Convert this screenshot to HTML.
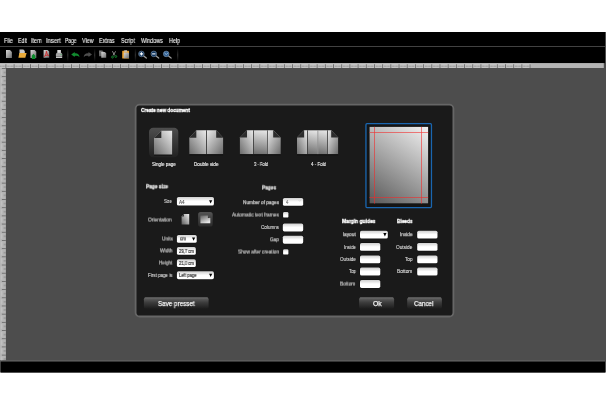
<!DOCTYPE html>
<html><head><meta charset="utf-8"><title>Create new document</title>
<style>
html,body{margin:0;padding:0;background:#fff;}
body{width:606px;height:406px;position:relative;overflow:hidden;font-family:"Liberation Sans",sans-serif;color:#fff;}
.a,.t{position:absolute;}
.t{white-space:nowrap;line-height:1;transform-origin:0 50%;will-change:transform;-webkit-text-stroke-width:0.12px;}

</style></head><body>
<svg class="a" style="left:0;top:0" width="606" height="406" viewBox="0 0 606 406">
<rect x="0" y="32" width="606" height="340.5" fill="#4d4d4d"/>
<rect x="0" y="32" width="605" height="31.1" fill="#000"/>
<rect x="0" y="46" width="605" height="1" fill="#424242"/>
<rect x="0" y="63.1" width="603.8" height="4.9" fill="#b4b4b4"/>
<rect x="0" y="68" width="5.9" height="292.3" fill="#b4b4b4"/>
<rect x="0" y="360.3" width="605" height="1.3" fill="#626262"/>
<rect x="0.8" y="361.6" width="604.2" height="10.9" fill="#000"/>
</svg>
<svg class="a" style="left:0;top:0" width="606" height="406" viewBox="0 0 606 406">
<defs>
<linearGradient id="gl" x1="1" y1="0" x2="0" y2="1"><stop offset="0" stop-color="#ececec"/><stop offset="1" stop-color="#6a6a6a"/></linearGradient>
<linearGradient id="gr" x1="0" y1="0" x2="1" y2="1"><stop offset="0" stop-color="#ececec"/><stop offset="1" stop-color="#6a6a6a"/></linearGradient>
<linearGradient id="gm" x1="0.5" y1="0" x2="0.4" y2="1"><stop offset="0" stop-color="#e4e4e4"/><stop offset="1" stop-color="#707070"/></linearGradient>
<linearGradient id="gtile" x1="0" y1="0" x2="0" y2="1"><stop offset="0" stop-color="#4e4e4e"/><stop offset="1" stop-color="#212121"/></linearGradient>
<linearGradient id="gprev" gradientUnits="userSpaceOnUse" x1="428" y1="126.8" x2="373" y2="205.9"><stop offset="0" stop-color="#f2f2f2"/><stop offset="1" stop-color="#585858"/></linearGradient>
</defs>
<rect x="135.6" y="104.6" width="317.8" height="211.9" rx="4" fill="#1a1a1a" stroke="#666" stroke-width="1.8"/>
<!-- selected tile -->
<rect x="149" y="127.8" width="29.3" height="29.4" rx="4.2" fill="url(#gtile)"/>
<!-- single page -->
<path d="M161.3 130.8H172.1V154.7H154V137.9Z" fill="url(#gl)"/>
<path d="M161.3 130.8V137.9H154Z" fill="#2c2c2c"/>
<!-- double -->
<path d="M196.3 130.3H206.4V154.3H189.3V137.7Z" fill="url(#gl)"/>
<path d="M196.3 130.3V137.7H189.3Z" fill="#2c2c2c"/>
<path d="M206.4 130.3H216.2L223.1 137.7V154.3H206.4Z" fill="url(#gr)"/>
<path d="M216.2 130.3V137.7H223.1Z" fill="#2c2c2c"/>
<rect x="206" y="130.3" width="0.8" height="24" fill="#333"/>
<!-- 3 fold -->
<path d="M247 130.3H253.5V154.3H239.9V137.6Z" fill="url(#gl)"/>
<path d="M247 130.3V137.6H239.9Z" fill="#2c2c2c"/>
<rect x="253.5" y="130.3" width="14" height="24" fill="url(#gm)"/>
<path d="M267.5 130.3H273.2L280.7 137.6V154.3H267.5Z" fill="url(#gr)"/>
<path d="M273.2 130.3V137.6H280.7Z" fill="#2c2c2c"/>
<rect x="253.1" y="130.3" width="0.8" height="24" fill="#3a3a3a"/>
<rect x="267.1" y="130.3" width="0.8" height="24" fill="#555"/>
<!-- 4 fold -->
<path d="M304.1 130.3H307.5V154.3H297V137.6Z" fill="url(#gl)"/>
<path d="M304.1 130.3V137.6H297Z" fill="#2c2c2c"/>
<rect x="307.5" y="130.3" width="10.4" height="24" fill="url(#gm)"/>
<rect x="317.9" y="130.3" width="9.6" height="24" fill="url(#gm)"/>
<path d="M327.5 130.3H331.2L338.1 137.6V154.3H327.5Z" fill="url(#gr)"/>
<path d="M331.2 130.3V137.6H338.1Z" fill="#2c2c2c"/>
<rect x="307.1" y="130.3" width="0.8" height="24" fill="#3a3a3a"/>
<rect x="317.5" y="130.3" width="0.8" height="24" fill="#999"/>
<rect x="327.1" y="130.3" width="0.8" height="24" fill="#444"/>
<!-- shadow -->
<g fill="#0b0b0b" opacity="0.8"><rect x="154" y="154.6" width="18.2" height="1"/><rect x="189.3" y="154.2" width="33.8" height="1.1"/><rect x="239.9" y="154.2" width="40.8" height="1.1"/><rect x="297" y="154.2" width="41.1" height="1.1"/></g>
<!-- preview -->
<rect x="365.95" y="123.7" width="65.5" height="83.9" rx="1" fill="#141414" stroke="#1a66b0" stroke-width="1.3"/>
<rect x="369.6" y="126.9" width="58.5" height="76.4" fill="url(#gprev)"/>
<g stroke="#f22a2a" stroke-width="0.65" opacity="0.9">
<line x1="374.5" y1="126.8" x2="374.5" y2="203.7"/>
<line x1="421.5" y1="126.8" x2="421.5" y2="203.7"/>
<line x1="369.4" y1="132.5" x2="428.2" y2="132.5"/>
<line x1="369.4" y1="197.5" x2="428.2" y2="197.5"/>
</g>
</svg>

<svg class="a" style="left:0;top:0" width="606" height="406" viewBox="0 0 606 406">
<defs>
<linearGradient id="tdoc" x1="0" y1="0" x2="1" y2="1"><stop offset="0" stop-color="#d8d8d8"/><stop offset="1" stop-color="#6e6e6e"/></linearGradient>
<linearGradient id="tdoc2" x1="0" y1="0" x2="1" y2="1"><stop offset="0" stop-color="#8a8a8a"/><stop offset="1" stop-color="#444"/></linearGradient>
<linearGradient id="tsep" x1="0" y1="0" x2="0" y2="1"><stop offset="0" stop-color="#000"/><stop offset="0.5" stop-color="#2e2e2e"/><stop offset="1" stop-color="#000"/></linearGradient>
<linearGradient id="gport" x1="1" y1="0" x2="0" y2="1"><stop offset="0" stop-color="#f0f0f0"/><stop offset="1" stop-color="#5c5c5c"/></linearGradient>
<linearGradient id="gland" x1="0" y1="0" x2="0.6" y2="1"><stop offset="0" stop-color="#606060"/><stop offset="1" stop-color="#e8e8e8"/></linearGradient>
<linearGradient id="gtile2" x1="0" y1="0" x2="0" y2="1"><stop offset="0" stop-color="#545454"/><stop offset="1" stop-color="#2a2a2a"/></linearGradient>
<pattern id="rh" x="5.45" y="63" width="8.19" height="5" patternUnits="userSpaceOnUse">
<rect x="0" y="0" width="8.19" height="5" fill="#b4b4b4"/>
<rect x="0.9" y="1.1" width="7.29" height="3.7" fill="#c6c6c6"/>
<rect x="1.6" y="2.5" width="2.7" height="1.4" fill="#a2a2a2"/>
<rect x="4.8" y="2.5" width="2.9" height="1.4" fill="#a2a2a2"/>
<rect x="0" y="1.3" width="0.95" height="3.7" fill="#707070"/>
</pattern>
<pattern id="rv" x="0" y="68" width="6" height="8.19" patternUnits="userSpaceOnUse">
<rect x="1.9" y="0" width="4.1" height="0.9" fill="#6c6c6c"/>
<rect x="3.6" y="4.1" width="2.4" height="0.8" fill="#7c7c7c"/>
<rect x="0.8" y="1.9" width="1.5" height="5.2" fill="#c0c0c0"/>
</pattern>
</defs>
<rect x="0" y="63.1" width="531.2" height="4.9" fill="url(#rh)"/>
<rect x="0" y="68" width="5.9" height="292.2" fill="url(#rv)"/>
<!-- new -->
<path d="M6 50.1H10L11.9 52V57.9H6Z" fill="url(#tdoc)"/>
<!-- open -->
<path d="M19.5 49.4H23.3L24.8 51V54H19.5Z" fill="#c8c8c8"/>
<path d="M19.3 52.9H26.6L25.3 57.7H18.4Z" fill="#e9ab3a"/>
<!-- save -->
<path d="M30.5 50.1H34.6L36.3 51.8V57.9H30.5Z" fill="url(#tdoc)"/>
<path d="M33.5 53.8L35.3 55.8V58.9H31.8V55.8Z" fill="#0c8c2c"/>
<!-- pdf -->
<path d="M43.6 50H47.6L49.2 51.6V57.7H43.6Z" fill="url(#tdoc)"/>
<path d="M46.3 51.2C46.9 53 47 54.3 48.6 55.6M46.4 51.4C46.3 53.5 45.5 55.3 44.4 56.6M44.6 56.2C46 55.2 47.3 55 48.7 55.4" stroke="#d42020" stroke-width="0.9" fill="none"/>
<!-- print -->
<rect x="57.3" y="50" width="3.6" height="3.4" fill="#d8d8d8"/>
<path d="M56.8 52.8H61.4L62.3 54V56.2H55.9V54Z" fill="#a4a4a4"/>
<rect x="56" y="56.5" width="6.2" height="1.4" fill="#dedede"/>
<rect x="60.6" y="54.2" width="0.9" height="0.9" fill="#22b040"/>
<!-- seps -->
<rect x="67.1" y="48.5" width="1.3" height="13" fill="url(#tsep)"/>
<rect x="94" y="48.5" width="1.3" height="13" fill="url(#tsep)"/>
<rect x="134.8" y="48.5" width="1.3" height="13" fill="url(#tsep)"/>
<rect x="177" y="48.5" width="1.3" height="13" fill="url(#tsep)"/>
<!-- undo -->
<path d="M71.2 54.5L74.7 52.1V53.2C77.9 53 79.7 54.7 79.4 57.3C78.4 56 77 55.7 74.7 55.9V57Z" fill="#128c30"/>
<!-- redo -->
<path d="M92 54.5L88.5 52.1V53.2C85.3 53 83.5 54.7 83.8 57.3C84.8 56 86.2 55.7 88.5 55.9V57Z" fill="#4e4e4e"/>
<!-- copy -->
<path d="M99.1 50.6H102.4L103.6 51.8V56.2H99.1Z" fill="url(#tdoc2)"/>
<path d="M101.3 51.9H104.8L106.2 53.3V57.8H101.3Z" fill="url(#tdoc)"/>
<!-- cut -->
<path d="M112.4 51.2L114.6 55.4M115.6 51.3L113.2 55.4" stroke="#aaa" stroke-width="0.8" fill="none"/>
<circle cx="112.5" cy="57.1" r="0.95" fill="none" stroke="#18a038" stroke-width="0.75"/>
<circle cx="115.8" cy="56.5" r="0.95" fill="none" stroke="#18a038" stroke-width="0.75"/>
<!-- paste -->
<rect x="122.2" y="50.8" width="6.8" height="7.7" rx="0.6" fill="#e8a030"/>
<rect x="124.2" y="50.3" width="2.8" height="1.4" fill="#c8c8c8"/>
<path d="M123.8 52.4H127.8L129 53.6V58.3H123.8Z" fill="url(#tdoc)"/>
<!-- zoom -->
<g>
<line x1="143.7" y1="56.1" x2="146.3" y2="58.1" stroke="#a0a0a0" stroke-width="1.2" stroke-linecap="round"/>
<circle cx="141.4" cy="53.9" r="2.8" fill="#103660" stroke="#7f93aa" stroke-width="0.6"/>
<path d="M139.7 53.9H143.1M141.4 52.2V55.6" stroke="#fff" stroke-width="1.1"/>
<line x1="156.1" y1="56.1" x2="158.7" y2="58.1" stroke="#a0a0a0" stroke-width="1.2" stroke-linecap="round"/>
<circle cx="153.8" cy="53.9" r="2.8" fill="#103660" stroke="#7f93aa" stroke-width="0.6"/>
<path d="M152.1 53.9H155.5" stroke="#fff" stroke-width="1.1"/>
<line x1="168.5" y1="56.1" x2="171.1" y2="58.1" stroke="#a0a0a0" stroke-width="1.2" stroke-linecap="round"/>
<circle cx="166.2" cy="53.9" r="2.8" fill="#2f5f92" stroke="#7f93aa" stroke-width="0.6"/>
<path d="M164.5 53L166.2 54.5L167.9 53" stroke="#b8d0e8" stroke-width="0.8" fill="none"/>
</g>
<!-- orientation -->
<path d="M184 214H189.2V224.5H181.6V216.4Z" fill="url(#gport)"/>
<path d="M184 214V216.4H181.6Z" fill="#3a3a3a"/>
<rect x="198.1" y="212.1" width="14.6" height="14.4" rx="2.6" fill="url(#gtile2)"/>
<path d="M200.4 215.6H207.9L210.3 218V223.2H200.4Z" fill="url(#gland)"/>
<path d="M207.9 215.6V218H210.3Z" fill="#3a3a3a"/>
</svg>

<svg class="a" style="left:0;top:0" width="606" height="406" viewBox="0 0 606 406">
<defs>
<linearGradient id="ginp" x1="0" y1="0" x2="0" y2="1"><stop offset="0" stop-color="#cecece"/><stop offset="0.5" stop-color="#fff"/><stop offset="1" stop-color="#fff"/></linearGradient>
<linearGradient id="gbtn" x1="0" y1="0" x2="0" y2="1"><stop offset="0" stop-color="#626262"/><stop offset="0.45" stop-color="#3c3c3c"/><stop offset="1" stop-color="#1c1c1c"/></linearGradient>
</defs>
<rect x="176.9" y="197.0" width="37.0" height="8.5" rx="1.6" fill="url(#ginp)" stroke="#0a0a0a" stroke-width="0.6" paint-order="stroke"/>
<rect x="176.9" y="234.9" width="19.8" height="7.9" rx="1.6" fill="url(#ginp)" stroke="#0a0a0a" stroke-width="0.6" paint-order="stroke"/>
<rect x="176.9" y="247.1" width="18.9" height="7.7" rx="1.6" fill="url(#ginp)" stroke="#0a0a0a" stroke-width="0.6" paint-order="stroke"/>
<rect x="176.9" y="259.3" width="18.9" height="7.7" rx="1.6" fill="url(#ginp)" stroke="#0a0a0a" stroke-width="0.6" paint-order="stroke"/>
<rect x="176.9" y="271.3" width="37.0" height="7.9" rx="1.6" fill="url(#ginp)" stroke="#0a0a0a" stroke-width="0.6" paint-order="stroke"/>
<rect x="282.9" y="198.0" width="20.3" height="7.8" rx="1.6" fill="url(#ginp)" stroke="#0a0a0a" stroke-width="0.6" paint-order="stroke"/>
<rect x="282.8" y="223.4" width="20.4" height="8.0" rx="1.6" fill="url(#ginp)" stroke="#0a0a0a" stroke-width="0.6" paint-order="stroke"/>
<rect x="282.8" y="235.7" width="20.4" height="8.0" rx="1.6" fill="url(#ginp)" stroke="#0a0a0a" stroke-width="0.6" paint-order="stroke"/>
<rect x="360" y="230.7" width="27.8" height="7.9" rx="1.6" fill="url(#ginp)" stroke="#0a0a0a" stroke-width="0.6" paint-order="stroke"/>
<rect x="360" y="242.9" width="20.3" height="7.9" rx="1.6" fill="url(#ginp)" stroke="#0a0a0a" stroke-width="0.6" paint-order="stroke"/>
<rect x="360" y="255.4" width="20.3" height="7.9" rx="1.6" fill="url(#ginp)" stroke="#0a0a0a" stroke-width="0.6" paint-order="stroke"/>
<rect x="360" y="267.6" width="20.3" height="7.9" rx="1.6" fill="url(#ginp)" stroke="#0a0a0a" stroke-width="0.6" paint-order="stroke"/>
<rect x="360" y="280" width="20.3" height="7.9" rx="1.6" fill="url(#ginp)" stroke="#0a0a0a" stroke-width="0.6" paint-order="stroke"/>
<rect x="417.2" y="230.7" width="20.3" height="7.9" rx="1.6" fill="url(#ginp)" stroke="#0a0a0a" stroke-width="0.6" paint-order="stroke"/>
<rect x="417.2" y="242.9" width="20.3" height="7.9" rx="1.6" fill="url(#ginp)" stroke="#0a0a0a" stroke-width="0.6" paint-order="stroke"/>
<rect x="417.2" y="255.4" width="20.3" height="7.9" rx="1.6" fill="url(#ginp)" stroke="#0a0a0a" stroke-width="0.6" paint-order="stroke"/>
<rect x="417.2" y="267.6" width="20.3" height="7.9" rx="1.6" fill="url(#ginp)" stroke="#0a0a0a" stroke-width="0.6" paint-order="stroke"/>
<rect x="283.1" y="212.1" width="5.3" height="5.5" rx="1.2" fill="url(#ginp)" stroke="#0a0a0a" stroke-width="0.6" paint-order="stroke"/>
<rect x="283.1" y="249.3" width="5.3" height="5.3" rx="1.2" fill="url(#ginp)" stroke="#0a0a0a" stroke-width="0.6" paint-order="stroke"/>
<rect x="143.9" y="297.6" width="64.7" height="11.1" rx="1.6" fill="url(#gbtn)"/>
<rect x="144.70000000000002" y="297.6" width="63.1" height="0.6" fill="#7a7a7a"/>
<rect x="359.1" y="297.6" width="35.0" height="11.1" rx="1.6" fill="url(#gbtn)"/>
<rect x="359.90000000000003" y="297.6" width="33.4" height="0.6" fill="#7a7a7a"/>
<rect x="407.2" y="297.6" width="34.7" height="11.1" rx="1.6" fill="url(#gbtn)"/>
<rect x="408.0" y="297.6" width="33.1" height="0.6" fill="#7a7a7a"/>
<path d="M209.05 200.15H212.25L210.65 203.55Z" fill="#000"/>
<path d="M192.00 237.40H195.20L193.60 240.80Z" fill="#000"/>
<path d="M209.05 273.65H212.25L210.65 277.05Z" fill="#000"/>
<path d="M383.30 233.05H386.50L384.90 236.45Z" fill="#000"/>
<!-- spinner --><path d="M298.6 200.1L299.7 201.3L300.8 200.1" stroke="#c4c4c4" stroke-width="0.5" fill="none"/>
</svg>

<div class="t" style="left:4.10px;top:35px;font-size:6.9px;line-height:11.000px;height:11.000px;color:#f2f2f2;transform:scaleX(0.791);-webkit-text-stroke-width:0.12px;">File</div>
<div class="t" style="left:17.70px;top:35px;font-size:6.9px;line-height:11.000px;height:11.000px;color:#f2f2f2;transform:scaleX(0.757);-webkit-text-stroke-width:0.12px;">Edit</div>
<div class="t" style="left:31.00px;top:35px;font-size:6.9px;line-height:11.000px;height:11.000px;color:#f2f2f2;transform:scaleX(0.797);-webkit-text-stroke-width:0.12px;">Item</div>
<div class="t" style="left:45.90px;top:35px;font-size:6.9px;line-height:11.000px;height:11.000px;color:#f2f2f2;transform:scaleX(0.852);-webkit-text-stroke-width:0.12px;">Insert</div>
<div class="t" style="left:64.70px;top:35px;font-size:6.9px;line-height:11.000px;height:11.000px;color:#f2f2f2;transform:scaleX(0.714);-webkit-text-stroke-width:0.12px;">Page</div>
<div class="t" style="left:82.00px;top:35px;font-size:6.9px;line-height:11.000px;height:11.000px;color:#f2f2f2;transform:scaleX(0.789);-webkit-text-stroke-width:0.12px;">View</div>
<div class="t" style="left:99.10px;top:35px;font-size:6.9px;line-height:11.000px;height:11.000px;color:#f2f2f2;transform:scaleX(0.803);-webkit-text-stroke-width:0.12px;">Extras</div>
<div class="t" style="left:121.40px;top:35px;font-size:6.9px;line-height:11.000px;height:11.000px;color:#f2f2f2;transform:scaleX(0.794);-webkit-text-stroke-width:0.12px;">Script</div>
<div class="t" style="left:140.80px;top:35px;font-size:6.9px;line-height:11.000px;height:11.000px;color:#f2f2f2;transform:scaleX(0.779);-webkit-text-stroke-width:0.12px;">Windows</div>
<div class="t" style="left:168.70px;top:35px;font-size:6.9px;line-height:11.000px;height:11.000px;color:#f2f2f2;transform:scaleX(0.789);-webkit-text-stroke-width:0.12px;">Help</div>
<div class="t" style="left:141.10px;top:105px;font-size:5.2px;line-height:10.000px;height:10.000px;color:#fff;transform:scaleX(0.907);font-weight:bold;-webkit-text-stroke-width:0.3px;-webkit-text-stroke-width:0.30px;">Create new document</div>
<div class="t" style="left:152.20px;top:160px;font-size:4.5px;line-height:9.000px;height:9.000px;color:#f2f2f2;transform:scaleX(1.005);-webkit-text-stroke-width:0.12px;">Single page</div>
<div class="t" style="left:193.50px;top:160px;font-size:4.5px;line-height:9.000px;height:9.000px;color:#f2f2f2;transform:scaleX(1.031);-webkit-text-stroke-width:0.12px;">Double side</div>
<div class="t" style="left:254.00px;top:160px;font-size:4.5px;line-height:9.000px;height:9.000px;color:#f2f2f2;transform:scaleX(0.918);-webkit-text-stroke-width:0.12px;">3 - Fold</div>
<div class="t" style="left:311.00px;top:160px;font-size:4.5px;line-height:9.000px;height:9.000px;color:#f2f2f2;transform:scaleX(0.983);-webkit-text-stroke-width:0.12px;">4 - Fold</div>
<div class="t" style="left:145.70px;top:181px;font-size:5.2px;line-height:10.000px;height:10.000px;color:rgba(255,255,255,0.54);-webkit-text-stroke-color:rgba(255,255,255,0.54);text-shadow:0 1px 0 rgba(255,255,255,0.46);transform:scaleX(0.928);font-weight:bold;-webkit-text-stroke-width:0.3px;-webkit-text-stroke-width:0.48px;">Page size</div>
<div class="t" style="left:261.70px;top:182px;font-size:5.2px;line-height:10.000px;height:10.000px;color:rgba(255,255,255,0.44);-webkit-text-stroke-color:rgba(255,255,255,0.44);text-shadow:0 1px 0 rgba(255,255,255,0.56);transform:scaleX(0.920);font-weight:bold;-webkit-text-stroke-width:0.3px;-webkit-text-stroke-width:0.48px;">Pages</div>
<div class="t" style="left:341.90px;top:216px;font-size:5.2px;line-height:10.000px;height:10.000px;color:#fff;transform:scaleX(0.950);font-weight:bold;-webkit-text-stroke-width:0.3px;-webkit-text-stroke-width:0.30px;">Margin guides</div>
<div class="t" style="left:397.10px;top:216px;font-size:5.2px;line-height:10.000px;height:10.000px;color:#fff;transform:scaleX(0.903);font-weight:bold;-webkit-text-stroke-width:0.3px;-webkit-text-stroke-width:0.30px;">Bleeds</div>
<div class="t" style="left:164.40px;top:197px;font-size:4.6px;line-height:9.000px;height:9.000px;color:#e2e2e2;transform:scaleX(0.860);-webkit-text-stroke-width:0.06px;">Size</div>
<div class="t" style="left:148.30px;top:215px;font-size:4.6px;line-height:9.000px;height:9.000px;color:rgba(226,226,226,0.35);-webkit-text-stroke-color:rgba(226,226,226,0.35);text-shadow:0 1px 0 rgba(226,226,226,0.65);transform:scaleX(1.058);-webkit-text-stroke-width:0.24px;">Orientation</div>
<div class="t" style="left:161.50px;top:234px;font-size:4.6px;line-height:9.000px;height:9.000px;color:rgba(226,226,226,0.35);-webkit-text-stroke-color:rgba(226,226,226,0.35);text-shadow:0 1px 0 rgba(226,226,226,0.65);transform:scaleX(1.040);-webkit-text-stroke-width:0.24px;">Units</div>
<div class="t" style="left:159.80px;top:246px;font-size:4.6px;line-height:9.000px;height:9.000px;color:rgba(226,226,226,0.45);-webkit-text-stroke-color:rgba(226,226,226,0.45);text-shadow:0 1px 0 rgba(226,226,226,0.55);transform:scaleX(1.063);-webkit-text-stroke-width:0.24px;">Width</div>
<div class="t" style="left:158.90px;top:258px;font-size:4.6px;line-height:9.000px;height:9.000px;color:rgba(226,226,226,0.35);-webkit-text-stroke-color:rgba(226,226,226,0.35);text-shadow:0 1px 0 rgba(226,226,226,0.65);transform:scaleX(1.008);-webkit-text-stroke-width:0.24px;">Height</div>
<div class="t" style="left:147.90px;top:271px;font-size:4.6px;line-height:9.000px;height:9.000px;color:#e2e2e2;transform:scaleX(0.974);-webkit-text-stroke-width:0.06px;">First page is</div>
<div class="t" style="left:242.80px;top:198px;font-size:4.6px;line-height:9.000px;height:9.000px;color:rgba(226,226,226,0.65);-webkit-text-stroke-color:rgba(226,226,226,0.65);text-shadow:0 1px 0 rgba(226,226,226,0.35);transform:scaleX(1.023);-webkit-text-stroke-width:0.24px;">Number of pages</div>
<div class="t" style="left:231.90px;top:210px;font-size:4.6px;line-height:9.000px;height:9.000px;color:rgba(226,226,226,0.35);-webkit-text-stroke-color:rgba(226,226,226,0.35);text-shadow:0 1px 0 rgba(226,226,226,0.65);transform:scaleX(1.057);-webkit-text-stroke-width:0.24px;">Automatic text frames</div>
<div class="t" style="left:260.90px;top:223px;font-size:4.6px;line-height:9.000px;height:9.000px;color:#e2e2e2;transform:scaleX(0.992);-webkit-text-stroke-width:0.06px;">Columns</div>
<div class="t" style="left:270.30px;top:235px;font-size:4.6px;line-height:9.000px;height:9.000px;color:rgba(226,226,226,0.55);-webkit-text-stroke-color:rgba(226,226,226,0.55);text-shadow:0 1px 0 rgba(226,226,226,0.45);transform:scaleX(0.989);-webkit-text-stroke-width:0.24px;">Gap</div>
<div class="t" style="left:237.80px;top:247px;font-size:4.6px;line-height:9.000px;height:9.000px;color:rgba(226,226,226,0.35);-webkit-text-stroke-color:rgba(226,226,226,0.35);text-shadow:0 1px 0 rgba(226,226,226,0.65);transform:scaleX(1.037);-webkit-text-stroke-width:0.24px;">Show after creation</div>
<div class="t" style="left:342.90px;top:230px;font-size:4.6px;line-height:9.000px;height:9.000px;color:rgba(226,226,226,0.65);-webkit-text-stroke-color:rgba(226,226,226,0.65);text-shadow:0 1px 0 rgba(226,226,226,0.35);transform:scaleX(1.043);-webkit-text-stroke-width:0.24px;">layout</div>
<div class="t" style="left:343.90px;top:243px;font-size:4.6px;line-height:9.000px;height:9.000px;color:#e2e2e2;transform:scaleX(0.961);-webkit-text-stroke-width:0.06px;">Inside</div>
<div class="t" style="left:339.90px;top:255px;font-size:4.6px;line-height:9.000px;height:9.000px;color:#e2e2e2;transform:scaleX(0.997);-webkit-text-stroke-width:0.06px;">Outside</div>
<div class="t" style="left:348.80px;top:267px;font-size:4.6px;line-height:9.000px;height:9.000px;color:#e2e2e2;transform:scaleX(0.930);-webkit-text-stroke-width:0.06px;">Top</div>
<div class="t" style="left:340.30px;top:279px;font-size:4.6px;line-height:9.000px;height:9.000px;color:rgba(226,226,226,0.35);-webkit-text-stroke-color:rgba(226,226,226,0.35);text-shadow:0 1px 0 rgba(226,226,226,0.65);transform:scaleX(1.057);-webkit-text-stroke-width:0.24px;">Bottom</div>
<div class="t" style="left:400.00px;top:230px;font-size:4.6px;line-height:9.000px;height:9.000px;color:rgba(226,226,226,0.65);-webkit-text-stroke-color:rgba(226,226,226,0.65);text-shadow:0 1px 0 rgba(226,226,226,0.35);transform:scaleX(1.018);-webkit-text-stroke-width:0.24px;">Inside</div>
<div class="t" style="left:396.10px;top:243px;font-size:4.6px;line-height:9.000px;height:9.000px;color:#e2e2e2;transform:scaleX(1.034);-webkit-text-stroke-width:0.06px;">Outside</div>
<div class="t" style="left:405.00px;top:255px;font-size:4.6px;line-height:9.000px;height:9.000px;color:#e2e2e2;transform:scaleX(1.011);-webkit-text-stroke-width:0.06px;">Top</div>
<div class="t" style="left:397.10px;top:267px;font-size:4.6px;line-height:9.000px;height:9.000px;color:#e2e2e2;transform:scaleX(1.057);-webkit-text-stroke-width:0.06px;">Bottom</div>
<div class="t" style="left:179.30px;top:198px;font-size:4.6px;line-height:9.000px;height:9.000px;color:#555;transform:scaleX(1.013);-webkit-text-stroke-width:0.12px;">A4</div>
<div class="t" style="left:179.50px;top:234px;font-size:4.6px;line-height:9.000px;height:9.000px;color:rgba(42,42,42,0.45);-webkit-text-stroke-color:rgba(42,42,42,0.45);text-shadow:0 1px 0 rgba(42,42,42,0.55);transform:scaleX(0.978);-webkit-text-stroke-width:0.38px;">cm</div>
<div class="t" style="left:179.40px;top:247px;font-size:4.5px;line-height:9.000px;height:9.000px;color:#262626;transform:scaleX(0.931);-webkit-text-stroke-width:0.15px;">29,7 cm</div>
<div class="t" style="left:179.40px;top:259px;font-size:4.5px;line-height:9.000px;height:9.000px;color:#262626;transform:scaleX(0.931);-webkit-text-stroke-width:0.15px;">21,0 cm</div>
<div class="t" style="left:179.40px;top:271px;font-size:4.6px;line-height:9.000px;height:9.000px;color:#333;transform:scaleX(0.917);-webkit-text-stroke-width:0.15px;">Left page</div>
<div class="t" style="left:286.20px;top:198px;font-size:4.5px;line-height:9.000px;height:9.000px;color:#7a7a7a;transform:scaleX(0.879);-webkit-text-stroke-width:0.15px;">4</div>
<div class="t" style="left:158.10px;top:298px;font-size:6.9px;line-height:11.000px;height:11.000px;color:#f2f2f2;transform:scaleX(0.911);-webkit-text-stroke-width:0.25px;">Save presset</div>
<div class="t" style="left:373.10px;top:298px;font-size:6.9px;line-height:11.000px;height:11.000px;color:#f2f2f2;transform:scaleX(0.987);-webkit-text-stroke-width:0.25px;">Ok</div>
<div class="t" style="left:414.40px;top:298px;font-size:6.9px;line-height:11.000px;height:11.000px;color:#f2f2f2;transform:scaleX(0.903);-webkit-text-stroke-width:0.25px;">Cancel</div>
</body></html>
